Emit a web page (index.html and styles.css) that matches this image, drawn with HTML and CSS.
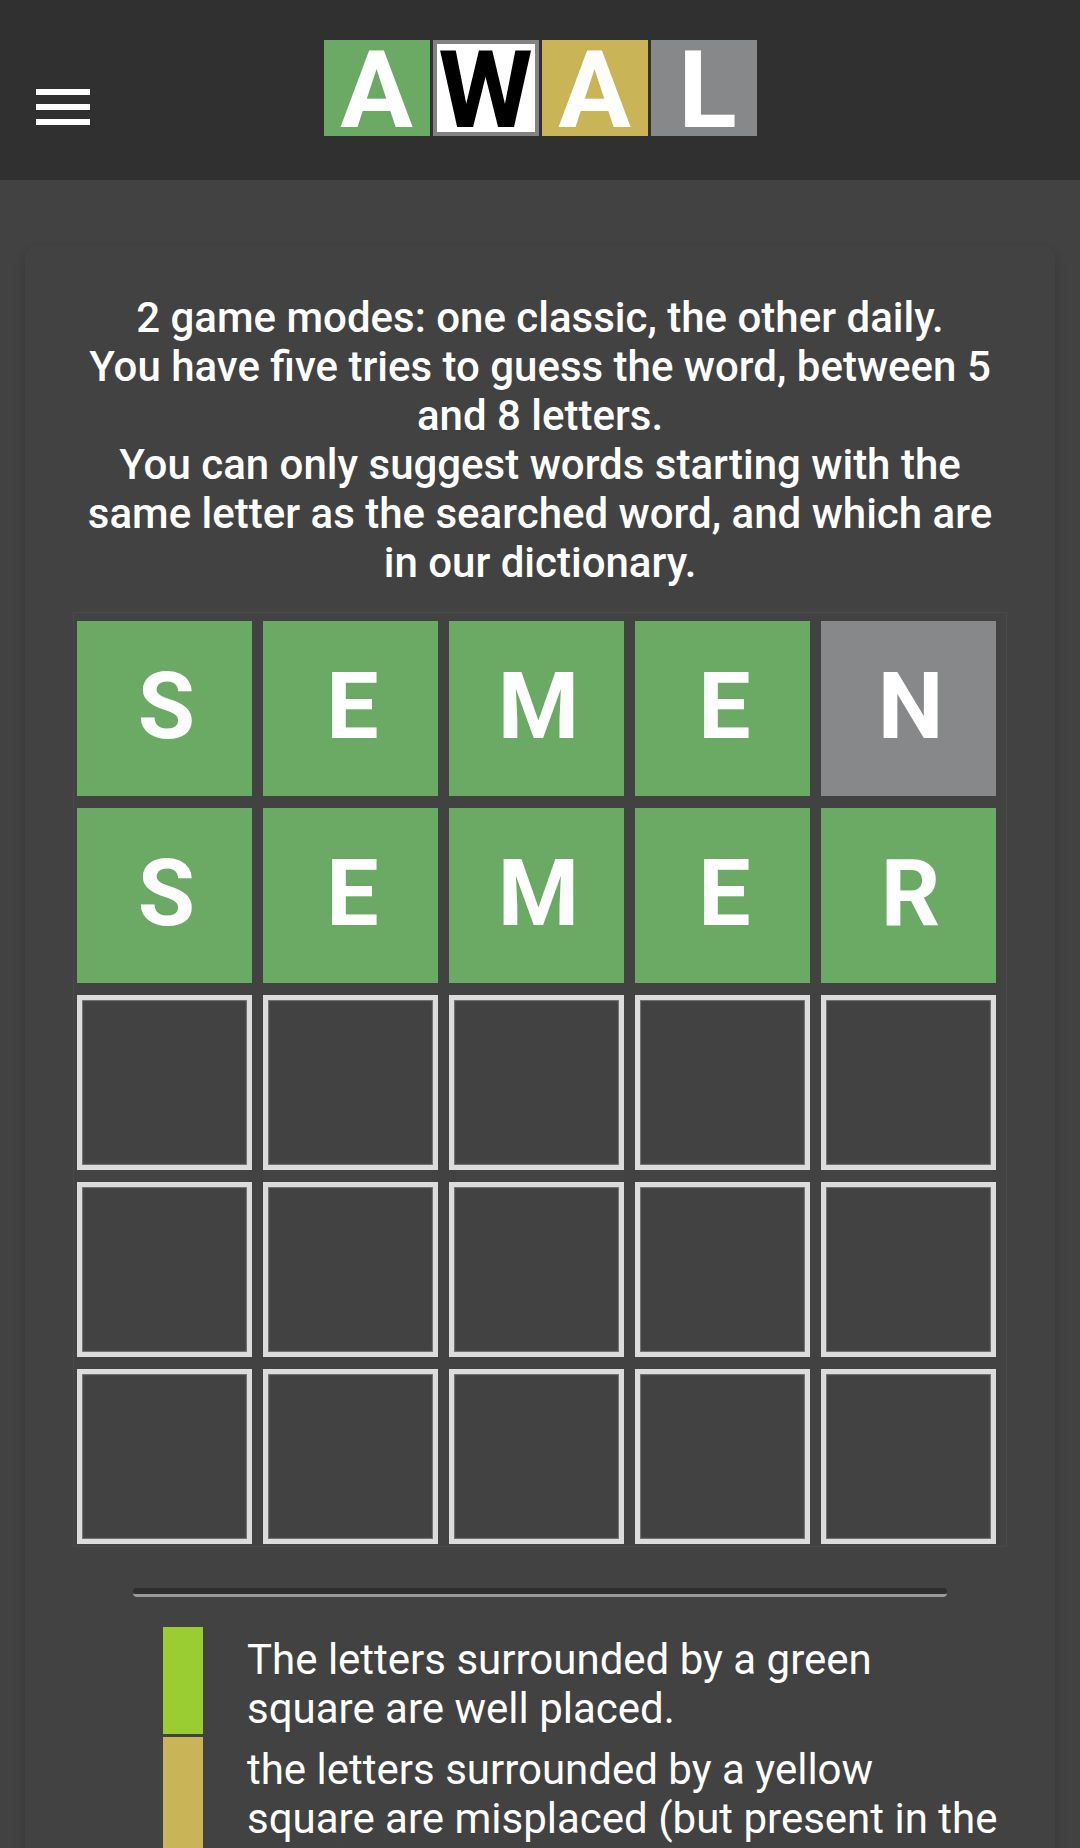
FILE: index.html
```html
<!DOCTYPE html>
<html lang="en">
<head>
<meta charset="utf-8">
<meta name="viewport" content="width=device-width, initial-scale=1">
<title>AWAL</title>
<link rel="stylesheet" href="styles.css">
</head>
<body>
<header class="topbar">
  <button class="menu" type="button" aria-label="Menu">
    <svg width="54" height="36" viewBox="0 0 54 36" fill="#fff" aria-hidden="true"><path d="M0 0h54v6H0zM0 15h54v6H0zM0 30h54v6H0z"/></svg>
  </button>
  <a class="logo" href="#" aria-label="AWAL home">
    <span class="logo-tile green">A</span>
    <span class="logo-tile outlined">W</span>
    <span class="logo-tile yellow">A</span>
    <span class="logo-tile grey">L</span>
  </a>
</header>
<main class="card">
  <p class="intro">2 game modes: one classic, the other daily.<br>You have five tries to guess the word, between 5 and 8 letters.<br>You can only suggest words starting with the same letter as the searched word, and which are in our dictionary.</p>
  <div class="board">
    <span class="cell green">S</span><span class="cell green">E</span><span class="cell green">M</span><span class="cell green">E</span><span class="cell grey">N</span>
    <span class="cell green">S</span><span class="cell green">E</span><span class="cell green">M</span><span class="cell green">E</span><span class="cell green">R</span>
    <span class="cell empty"></span><span class="cell empty"></span><span class="cell empty"></span><span class="cell empty"></span><span class="cell empty"></span>
    <span class="cell empty"></span><span class="cell empty"></span><span class="cell empty"></span><span class="cell empty"></span><span class="cell empty"></span>
    <span class="cell empty"></span><span class="cell empty"></span><span class="cell empty"></span><span class="cell empty"></span><span class="cell empty"></span>
  </div>
  <hr class="rule">
  <ul class="legend">
    <li class="legend-row"><span class="swatch lime"></span><span class="legend-text">The letters surrounded by a green square are well placed.</span></li>
    <li class="legend-row"><span class="swatch yellow"></span><span class="legend-text">the letters surrounded by a yellow square are misplaced (but present in the word).</span></li>
  </ul>
</main>
</body>
</html>
```

FILE: styles.css
```css
* {
  box-sizing: border-box;
}

html {
  scrollbar-width: none;
}

body {
  margin: 0;
  background: #424242;
  color: #fff;
  font-family: Roboto, "Liberation Sans", sans-serif;
  font-size: 42px;
  line-height: 49px;
}

.topbar {
  display: grid;
  grid-template-columns: 1fr auto 1fr;
  align-items: start;
  height: 180px;
  padding: 40px 36px 0;
  background: #303030;
}

.menu {
  justify-self: start;
  margin: 49px 0 0;
  padding: 0;
  border: 0;
  background: none;
}

.menu svg {
  display: block;
}

.logo {
  display: flex;
  gap: 3px;
  text-decoration: none;
}

.logo-tile {
  width: 106px;
  height: 96px;
  color: #fff;
  font-size: 108px;
  font-weight: 700;
  line-height: 100px;
  text-align: center;
}

.logo-tile.outlined {
  display: flex;
  align-items: center;
  justify-content: center;
  padding-top: 4px;
  border: 4px solid #828282;
  background: #fff;
  color: #000;
}

.logo-tile.grey {
  padding-left: 8px;
}

.green {
  background: #6aaa64;
}

.yellow {
  background: #c9b458;
}

.grey {
  background: #878889;
}

.lime {
  background: #9acd32;
}

.card {
  margin: 66px 25px 0;
  padding: 47px 48px;
  border-radius: 12px;
  box-shadow: 0 6px 12px rgba(0, 0, 0, 0.16);
}

.intro {
  margin: 0 0 25px;
  font-weight: 500;
  text-align: center;
}

.board {
  display: grid;
  grid-template-columns: repeat(5, 1fr);
  gap: 12px 11px;
  padding: 8px 10px 2px 3px;
  border: 1px solid #4a4a4a;
}

.cell {
  display: flex;
  align-items: center;
  justify-content: center;
  aspect-ratio: 1;
  padding: 0 0 4px 4px;
  font-size: 93px;
  font-weight: 700;
  line-height: 110px;
}

.cell.empty {
  border: 5px solid #dcdcdc;
  box-shadow: inset 0 0 1px 1px #777;
}

.rule {
  width: calc(100% - 120px);
  height: 9px;
  margin: 41px auto 30px;
  border: 0;
  border-bottom: 3px solid #9a9a9a;
  border-radius: 4px;
  background: #2e2e2e;
}

.legend {
  display: grid;
  gap: 3px;
  margin: 0;
  padding: 0 0 0 90px;
  list-style: none;
}

.legend-row {
  display: grid;
  grid-template-columns: 40px 1fr;
  column-gap: 44px;
}

.legend-text {
  padding: 8px 0 1px;
}
```
